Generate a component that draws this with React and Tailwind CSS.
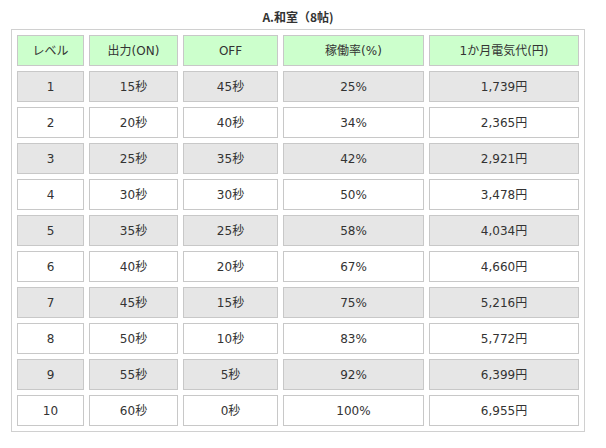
import React from 'react'

const rows = [
  ['1', '15秒', '45秒', '25%', '1,739円'],
  ['2', '20秒', '40秒', '34%', '2,365円'],
  ['3', '25秒', '35秒', '42%', '2,921円'],
  ['4', '30秒', '30秒', '50%', '3,478円'],
  ['5', '35秒', '25秒', '58%', '4,034円'],
  ['6', '40秒', '20秒', '67%', '4,660円'],
  ['7', '45秒', '15秒', '75%', '5,216円'],
  ['8', '50秒', '10秒', '83%', '5,772円'],
  ['9', '55秒', '5秒', '92%', '6,399円'],
  ['10', '60秒', '0秒', '100%', '6,955円'],
]

const widths = ['w-[67px]', 'w-[89px]', 'w-[95px]', 'w-[141px]', 'w-[150px]']
const heads = ['レベル', '出力(ON)', 'OFF', '稼働率(%)', '1か月電気代(円)']

export default function App() {
  return (
    <div className="w-[606px] h-[448px] bg-white text-[#333] font-['Noto_Sans_CJK_JP','Noto_Sans',sans-serif]">
      <div className="pt-[9px] pl-[11px]">
        <p className="w-[574px] text-center text-[12px] leading-[16px] font-bold mb-[4px]">A.和室（8帖)</p>
        <table className="w-[574px] border-separate border-spacing-[5px] border border-[#d0d0d0] text-[12px] table-fixed font-['DejaVu_Sans','Noto_Sans_CJK_JP',sans-serif]">
          <thead>
            <tr>
              {heads.map((h, i) => (
                <th key={h} className={`${widths[i]} h-[31px] p-0 font-normal text-center align-middle bg-[#ccffcc] border border-[#c8c8c8]`}>
                  {h}
                </th>
              ))}
            </tr>
          </thead>
          <tbody>
            {rows.map((r, ri) => (
              <tr key={r[0]}>
                {r.map((c, i) => (
                  <td
                    key={i}
                    className={`${widths[i]} h-[31px] p-0 text-center align-middle border border-[#c8c8c8] ${ri % 2 === 0 ? 'bg-[#e6e6e6]' : 'bg-white'}`}
                  >
                    {c}
                  </td>
                ))}
              </tr>
            ))}
          </tbody>
        </table>
      </div>
    </div>
  )
}
